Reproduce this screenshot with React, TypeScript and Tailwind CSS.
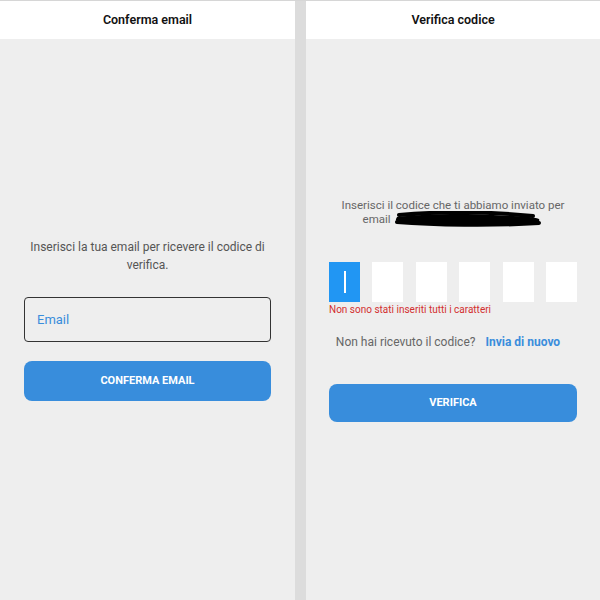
import { useState } from "react";

function Scribble() {
  return (
    <svg width="150" height="16" viewBox="0 0 150 16" className="inline-block align-middle -mt-[2px]">
      <path
        d="M4 6 C30 3, 70 2, 100 4 C120 5, 140 5, 146 8 C148 12, 140 14, 120 13 C90 12, 50 13, 20 12 C8 12, 2 11, 3 8 Z"
        fill="#000"
      />
      <path d="M6 4 C40 1, 90 0, 140 5" stroke="#000" strokeWidth="4" fill="none" strokeLinecap="round" />
      <path d="M4 11 C40 14, 100 15, 146 12" stroke="#000" strokeWidth="4" fill="none" strokeLinecap="round" />
    </svg>
  );
}

function Header({ title }: { title: string }) {
  return (
    <div className="h-[38px] bg-white flex items-center justify-center text-[12.5px] font-semibold text-[#111]">
      {title}
    </div>
  );
}

function EmailPanel() {
  const [email, setEmail] = useState("");
  return (
    <div className="w-[295px] flex flex-col">
      <Header title="Conferma email" />
      <div className="flex-1 px-[24px] pt-[199px] flex flex-col">
        <p className="text-center text-[12px] leading-[18px] text-[#555]">
          Inserisci la tua email per ricevere il codice di verifica.
        </p>
        <input
          value={email}
          onChange={(e) => setEmail(e.target.value)}
          placeholder="Email"
          className="mt-[23px] h-[45px] w-full rounded-[4px] border border-[#333] bg-transparent px-[12px] text-[13px] text-[#333] placeholder:text-[#3a8ddc] outline-none"
        />
        <button className="mt-[19px] h-[40px] w-full rounded-[8px] bg-[#388ddc] text-white text-[11px] font-bold">
          CONFERMA EMAIL
        </button>
      </div>
    </div>
  );
}

function CodePanel() {
  const boxes = [0, 1, 2, 3, 4, 5];
  return (
    <div className="flex-1 flex flex-col">
      <Header title="Verifica codice" />
      <div className="flex-1 pl-[23px] pr-[23px] pt-[159px] flex flex-col">
        <p className="text-center text-[11.5px] leading-[14px] text-[#666]">
          Inserisci il codice che ti abbiamo inviato per email <Scribble />
        </p>
        <div className="mt-[35px] flex justify-between">
          {boxes.map((i) => (
            <div
              key={i}
              className={
                i === 0
                  ? "w-[31px] h-[40px] bg-[#2196f3] flex items-center justify-center"
                  : "w-[31px] h-[40px] bg-white"
              }
            >
              {i === 0 && <div className="w-[2px] h-[22px] bg-white" />}
            </div>
          ))}
        </div>
        <p className="mt-[2px] text-[10px] leading-[12px] text-[#d32f2f]">
          Non sono stati inseriti tutti i caratteri
        </p>
        <div className="mt-[17px] mr-[10px] flex items-center justify-center gap-[10px] text-[12px] leading-[18px]">
          <span className="text-[#666]">Non hai ricevuto il codice?</span>
          <span className="text-[#3a8ddc] font-bold">Invia di nuovo</span>
        </div>
        <button className="mt-[33px] h-[38px] w-full rounded-[8px] bg-[#388ddc] text-white text-[11px] font-bold">
          VERIFICA
        </button>
      </div>
    </div>
  );
}

export default function App() {
  return (
    <div
      className="w-[600px] h-[600px] flex bg-[#eeeeee] border-t border-[#d6d6d6] overflow-hidden"
      style={{ fontFamily: "Roboto, 'Liberation Sans', sans-serif" }}
    >
      <EmailPanel />
      <div className="w-[11px] bg-[#dcdcdc]" />
      <CodePanel />
    </div>
  );
}
